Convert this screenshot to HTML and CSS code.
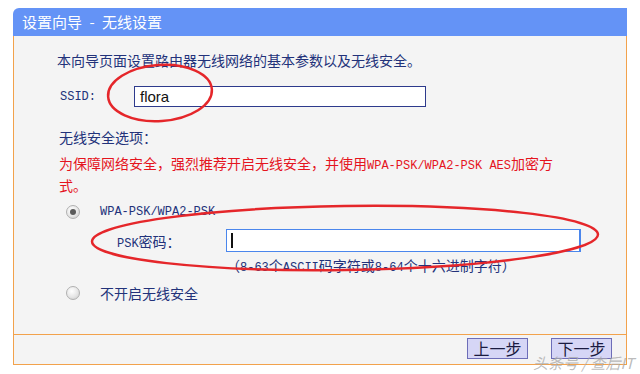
FILE: index.html
```html
<!DOCTYPE html>
<html lang="zh-CN">
<head>
    <meta charset="UTF-8">
    <title>设置向导 - 无线设置</title>
    <link rel="stylesheet" href="styles.css">
</head>
<body>

    <div class="page">
        <div class="panel">
            <div class="panel-title">设置向导 <span class="dash">-</span> 无线设置</div>

            <div class="panel-body">
                <p class="intro">本向导页面设置路由器无线网络的基本参数以及无线安全。</p>

                <div class="ssid-row">
                    <span class="ssid-label en">SSID:</span>
                    <div class="text-box ssid-box">flora</div>
                </div>

                <p class="section-label">无线安全选项：</p>
                <p class="warning">为保障网络安全，强烈推荐开启无线安全，并使用<span class="en">WPA-PSK/WPA2-PSK AES</span>加密方<br>式。</p>

                <div class="radio-row">
                    <span class="radio checked"></span>
                    <span class="radio-text en">WPA-PSK/WPA2-PSK</span>
                </div>

                <div class="psk-row">
                    <span class="psk-label"><span class="en">PSK</span>密码：</span>
                    <div class="text-box psk-box"><span class="caret"></span></div>
                </div>
                <p class="hint">（<span class="en">8-63</span>个<span class="en">ASCII</span>码字符或<span class="en">8-64</span>个十六进制字符）</p>

                <div class="radio-row off-row">
                    <span class="radio"></span>
                    <span class="radio-text">不开启无线安全</span>
                </div>
            </div>

            <div class="panel-footer">
                <button class="step-btn">上一步</button>
                <button class="step-btn">下一步</button>
            </div>
        </div>

        <!-- hand-drawn red marks on top of the screenshot -->
        <svg class="marks" width="640" height="374" viewBox="0 0 640 374">
            <ellipse cx="160" cy="93" rx="52" ry="28" transform="rotate(-4 160 93)" />
            <ellipse cx="345" cy="238" rx="253" ry="32" transform="rotate(-0.8 345 238)" />
        </svg>

        <div class="watermark">头条号 / 查后IT</div>
    </div>

</body>
</html>
```

FILE: styles.css
```css
/* General page */
body {
    margin: 0;
    background: #fff;
    font-family: "Noto Sans CJK SC", sans-serif;
    color: #22327a;
}

p {
    margin: 0;
}

/* latin runs are set narrow, like the router's bitmap font */
.en {
    font-family: "Liberation Mono", monospace;
    font-size: 12px;
    line-height: 1;
}

.page {
    position: relative;
    width: 640px;
    height: 374px;
    padding: 8px 0 0 13px;
    box-sizing: border-box;
}

.panel {
    width: 614px;
}

.panel-title {
    height: 28px;
    line-height: 28px;
    padding-left: 9px;
    background: #6493f6;
    border-top-left-radius: 6px;
    color: #fff;
    font-size: 15px;
}

.dash {
    margin: 0 4px;
}

.panel-body {
    height: 298px;
    box-sizing: border-box;
    padding: 14px 0 0 43px;
    background: #f4f4f4;
    border-left: 1px solid #f2a24c;
    border-right: 1px solid #f2a24c;
    font-size: 14px;
}

.intro {
    line-height: 20px;
}

.ssid-row {
    display: flex;
    align-items: center;
    margin-top: 16px;
    height: 21px;
}

.ssid-label {
    width: 74px;
    padding-left: 3px;
}

.text-box {
    background: #fff;
    box-sizing: border-box;
}

.ssid-box {
    width: 292px;
    height: 21px;
    border: 1px solid #2d3a8c;
    padding-left: 5px;
    line-height: 19px;
    font-family: "Liberation Sans", Arial, sans-serif;
    font-size: 15px;
    color: #111;
}

.section-label {
    margin-top: 20px;
    line-height: 20px;
    padding-left: 2px;
}

.warning {
    margin-top: 5px;
    line-height: 22px;
    padding-left: 2px;
    color: #e5141e;
}

.radio-row {
    display: flex;
    align-items: center;
    height: 20px;
    margin-top: 6px;
    padding-left: 9px;
}

.off-row {
    margin-top: 9px;
}

.radio {
    width: 14px;
    height: 14px;
    border-radius: 50%;
    border: 1px solid #b0b0b0;
    background: radial-gradient(circle at 40% 35%, #fff 0%, #e6e6e6 55%, #c8c8c8 100%);
    box-sizing: border-box;
    position: relative;
}

.radio.checked::after {
    content: "";
    position: absolute;
    left: 3px;
    top: 3px;
    width: 6px;
    height: 6px;
    border-radius: 50%;
    background: #5a5a5a;
}

.radio-text {
    margin-left: 20px;
}

.psk-row {
    display: flex;
    align-items: center;
    height: 23px;
    margin-top: 7px;
    padding-left: 60px;
}

.psk-label {
    width: 109px;
}

.psk-box {
    width: 355px;
    height: 23px;
    border: 1px solid #4a86ec;
    border-right-width: 2px;
    padding: 3px 0 0 4px;
}

.caret {
    display: block;
    width: 2px;
    height: 15px;
    background: #111;
}

.hint {
    margin-top: 4px;
    padding-left: 169px;
    line-height: 18px;
}

.panel-footer {
    height: 31px;
    box-sizing: border-box;
    display: flex;
    justify-content: flex-end;
    gap: 23px;
    padding: 3px 14px 0 0;
    background: #f4f4f4;
    border: 1px solid #f2a24c;
}

.step-btn {
    width: 61px;
    height: 21px;
    padding: 0;
    background: #d6d6f6;
    border: 1px solid #6d6db8;
    font-family: "Noto Sans CJK SC", sans-serif;
    font-size: 16px;
    line-height: 19px;
    color: #1a1a40;
}

.marks {
    position: absolute;
    left: 0;
    top: 0;
    pointer-events: none;
}

.marks ellipse {
    fill: none;
    stroke: #e5262a;
    stroke-width: 2.5;
}

.watermark {
    position: absolute;
    right: 6px;
    bottom: 1px;
    font-family: "Noto Sans CJK SC", sans-serif;
    font-size: 15px;
    font-style: italic;
    color: rgba(170, 170, 170, 0.8);
}
```
